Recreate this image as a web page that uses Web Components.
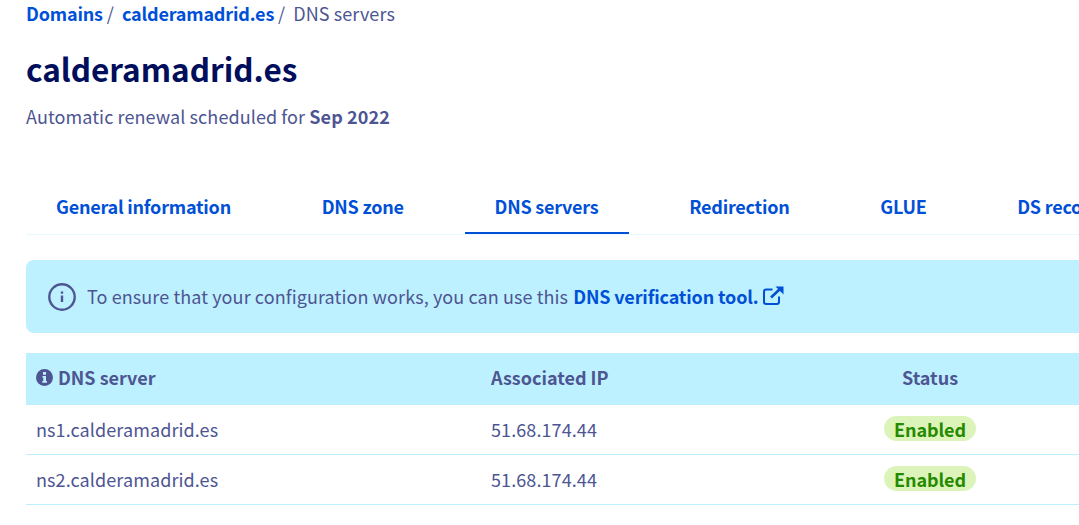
<!doctype html>
<html>
<head>
<meta charset="utf-8">
<style>
  html, body { margin: 0; background: #fff; overflow: hidden; height: 525px; }
  body { font-family: "Noto Sans CJK SC", "Noto Sans", sans-serif; font-size: 18px; color: #4d5592; letter-spacing: .09px; }
  #page { width: 1079px; overflow: hidden; padding: 0 0 0 26px; box-sizing: border-box; }
</style>
</head>
<body>
<div id="page">
  <domain-header name="calderamadrid.es" renewal="Sep 2022"></domain-header>
  <tab-bar></tab-bar>
  <info-banner>To ensure that your configuration works, you can use this <a slot="link">DNS verification tool.</a></info-banner>
  <dns-table></dns-table>
</div>

<script>
class DomainHeader extends HTMLElement {
  constructor() {
    super();
    this.attachShadow({ mode: 'open' });
  }

  connectedCallback() {
    const name = this.getAttribute('name');
    this.shadowRoot.innerHTML = `
      <style>
        :host { display: block; }
        nav { display: flex; height: 27px; align-items: center; line-height: 27px; }
        nav a { color: #0050d7; font-weight: 600; letter-spacing: -.18px; }
        nav span { margin: 0 8px 0 4px; font-weight: 400; }
        h1 { margin: 19px 0 0; font-size: 31.5px; line-height: 44px; font-weight: 700; color: #000e5c; letter-spacing: 0; }
        p { margin: 11px 0 0; line-height: 30px; height: 30px; }
        b { font-weight: 700; }
      </style>
      <nav><a>Domains</a><span>/</span><a>${name}</a><span>/</span>DNS servers</nav>
      <h1>${name}</h1>
      <p>Automatic renewal scheduled for <b>${this.getAttribute('renewal')}</b></p>
    `;
  }
}
customElements.define('domain-header', DomainHeader);

class TabBar extends HTMLElement {
  constructor() {
    super();
    this.attachShadow({ mode: 'open' });
  }

  connectedCallback() {
    const tabs = ['General information', 'DNS zone', 'DNS servers', 'Redirection', 'GLUE', 'DS records'];
    this.shadowRoot.innerHTML = `
      <style>
        :host { display: block; margin-top: 47px; border-bottom: 1px solid #e6f9ff; }
        .tabs { display: flex; gap: 30.7px; height: 56px; }
        .tab { padding: 0 30px; line-height: 56px; font-weight: 600; color: #0050d7; white-space: nowrap; box-sizing: border-box; height: 56px; letter-spacing: -.22px; }
        .tab.active { border-bottom: 2px solid #0050d7; }
      </style>
      <div class="tabs">
        ${tabs.map(t => `<div class="tab ${t === 'DNS servers' ? 'active' : ''}">${t}</div>`).join('')}
      </div>
    `;
  }
}
customElements.define('tab-bar', TabBar);

class InfoBanner extends HTMLElement {
  constructor() {
    super();
    this.attachShadow({ mode: 'open' });
  }

  connectedCallback() {
    this.shadowRoot.innerHTML = `
      <style>
        :host { display: flex; align-items: center; margin-top: 25px; height: 73px; padding-left: 22px; background: #bef1ff; border-radius: 8px 0 0 8px; }
        svg { flex: none; display: block; }
        .text { margin: -1px 0 0 11px; display: flex; align-items: center; white-space: pre; }
        ::slotted(a) { color: #0050d7; font-weight: 600; letter-spacing: -.15px; margin-left: 1px; }
        .ext { margin: -2px 0 0 4px; }
      </style>
      <svg width="28" height="28" viewBox="0 0 28 28" fill="none" stroke="#4d5592">
        <circle cx="14" cy="14" r="12.7" stroke-width="2.4"/>
        <rect x="12.8" y="12.5" width="2.4" height="6.5" fill="#4d5592" stroke="none"/>
        <rect x="12.8" y="8.5" width="2.4" height="2.2" fill="#4d5592" stroke="none"/>
      </svg>
      <div class="text"><slot></slot><slot name="link"></slot>
        <svg class="ext" width="21" height="19" viewBox="0 0 21 19" fill="none" stroke="#0050d7" stroke-width="2">
          <path d="M9.5 3.5H3.2C2 3.5 1 4.5 1 5.7v10.1C1 17 2 18 3.2 18h10.6c1.2 0 2.2-1 2.2-2.2V10.5"/>
          <path d="M8 11.5 17.5 2.5" stroke-width="2.6"/>
          <path d="M12.5 .5H20.5V8.5z" fill="#0050d7" stroke="none"/>
        </svg>
      </div>
    `;
  }
}
customElements.define('info-banner', InfoBanner);

class StatusBadge extends HTMLElement {
  constructor() {
    super();
    this.attachShadow({ mode: 'open' });
    this.shadowRoot.innerHTML = `
      <style>
        :host { display: inline-block; width: 92px; height: 25px; line-height: 27px; border-radius: 13px; background: #dcf4b9; color: #268a00; font-weight: 600; text-align: center; letter-spacing: -.1px; vertical-align: top; }
      </style>
      <slot></slot>
    `;
  }
}
customElements.define('status-badge', StatusBadge);

class DnsTable extends HTMLElement {
  constructor() {
    super();
    this.attachShadow({ mode: 'open' });
  }

  connectedCallback() {
    const rows = [['ns1.calderamadrid.es', '51.68.174.44'], ['ns2.calderamadrid.es', '51.68.174.44']];
    this.shadowRoot.innerHTML = `
      <style>
        :host { display: block; margin-top: 20px; }
        .row { display: grid; grid-template-columns: 455px 320px 258px 1fr; height: 50px; box-sizing: border-box; padding-bottom: 1px; border-bottom: 1px solid #bef1ff; align-items: center; }
        .row > div { padding-left: 10px; white-space: nowrap; }
        .row.head { height: 52px; background: #bef1ff; border: 0; font-weight: 700; letter-spacing: 0; padding-bottom: 5px; }
        .row > .status { padding: 0; text-align: center; }
        .name { display: flex; align-items: center; gap: 5px; }
        svg { display: block; margin-top: 2px; }
      </style>
      <div class="row head">
        <div class="name">
          <svg width="17" height="17" viewBox="0 0 17 17">
            <circle cx="8.5" cy="8.5" r="8.5" fill="#4d5592"/>
            <rect x="7" y="3" width="3" height="2.8" fill="#bef1ff"/>
            <path d="M6.5 7h3.5v5h1v1.8H6.3V12h1V8.8h-.8z" fill="#bef1ff"/>
          </svg>
          DNS server
        </div>
        <div>Associated IP</div>
        <div class="status">Status</div>
        <div></div>
      </div>
      ${rows.map(r => `
        <div class="row">
          <div>${r[0]}</div>
          <div>${r[1]}</div>
          <div class="status"><status-badge>Enabled</status-badge></div>
          <div></div>
        </div>`).join('')}
    `;
  }
}
customElements.define('dns-table', DnsTable);
</script>
</body>
</html>
